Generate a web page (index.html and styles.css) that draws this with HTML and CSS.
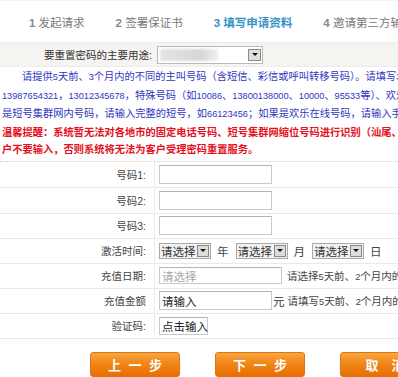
FILE: index.html
```html
<!DOCTYPE html>
<html lang="zh-CN">
<head>
<meta charset="utf-8">
<title>填写申请资料</title>
<link rel="stylesheet" href="styles.css">
</head>
<body>
<div class="page">
  <div class="steps">
    <span class="step"><b class="sn">1</b> 发起请求</span>
    <span class="step"><b class="sn">2</b> 签署保证书</span>
    <span class="step active"><b class="sn">3</b> 填写申请资料</span>
    <span class="step"><b class="sn">4</b> 邀请第三方辅助验证</span>
  </div>

  <div class="purpose">
    <div class="plabel">要重置密码的主要用途:</div>
    <div class="pcell">
      <span class="bigsel"><span class="blur"></span><span class="arrow"></span></span>
    </div>
  </div>

  <div class="info">
    <div class="line blue indent">请提供<span class="num">5</span>天前、<span class="num">3</span>个月内的不同的主叫号码（含短信、彩信或呼叫转移号码）。请填写<span class="num">3~5</span>个号码，如</div>
    <div class="line blue"><span class="num">13987654321</span>，<span class="num">13012345678</span>，特殊号码（如<span class="num">10086</span>、<span class="num">13800138000</span>、<span class="num">10000</span>、<span class="num">95533</span>等）、欢乐在线号码或</div>
    <div class="line blue">是短号集群网内号码，请输入完整的短号，如<span class="num">66123456</span>；如果是欢乐在线号码，请输入手机号码。</div>
    <div class="line red">温馨提醒：系统暂无法对各地市的固定电话号码、短号集群网缩位号码进行识别（汕尾、揭阳用</div>
    <div class="line red">户不要输入，否则系统将无法为客户受理密码重置服务。</div>
  </div>

  <div class="form">
    <div class="row tall">
      <div class="lab">号码1:</div>
      <div class="val"><span class="inp"></span></div>
    </div>
    <div class="row tall">
      <div class="lab">号码2:</div>
      <div class="val"><span class="inp"></span></div>
    </div>
    <div class="row">
      <div class="lab">号码3:</div>
      <div class="val"><span class="inp"></span></div>
    </div>
    <div class="row">
      <div class="lab">激活时间:</div>
      <div class="val">
        <span class="sel">请选择<span class="arr"></span></span><span class="unit">年</span>
        <span class="sel">请选择<span class="arr"></span></span><span class="unit">月</span>
        <span class="sel">请选择<span class="arr"></span></span><span class="unit">日</span>
      </div>
    </div>
    <div class="row">
      <div class="lab">充值日期:</div>
      <div class="val"><span class="inp wide ph">请选择</span><span class="hint">请选择<span class="num">5</span>天前、<span class="num">2</span>个月内的充值日期</span></div>
    </div>
    <div class="row">
      <div class="lab">充值金额</div>
      <div class="val"><span class="inp txt">请输入</span><span class="yuan">元</span><span class="hint">请填写<span class="num">5</span>天前、<span class="num">2</span>个月内的充值金额</span></div>
    </div>
    <div class="row">
      <div class="lab">验证码:</div>
      <div class="val"><span class="inp code txt">点击输入</span></div>
    </div>
  </div>

  <div class="buttons">
    <button class="btn">上 一 步</button>
    <button class="btn">下 一 步</button>
    <button class="btn">取　消</button>
  </div>
</div>
</body>
</html>
```

FILE: styles.css
```css
html, body {
  margin: 0;
  padding: 0;
  background: #fff;
}
body {
  width: 398px;
  height: 377px;
  overflow: hidden;
  font-family: "Liberation Sans", "Noto Sans CJK SC", sans-serif;
  color: #444;
}
.page {
  width: 460px;
}

/* steps */
.steps {
  height: 41px;
  display: flex;
  align-items: center;
  gap: 31px;
  padding-left: 29px;
  border-top: 1px dotted #ececec;
  border-bottom: 1px solid #ebebeb;
  font-size: 11.5px;
  color: #7a7a7a;
  white-space: nowrap;
}
.step .sn {
  font-weight: bold;
  color: #888;
}
.step.active {
  color: #3592c4;
  font-weight: bold;
}
.step.active .sn {
  color: #3592c4;
}

/* purpose row */
.purpose {
  height: 23px;
  display: flex;
  align-items: center;
  background: #f5f4f1;
  border-bottom: 1px solid #ececec;
  font-size: 10.5px;
}
.plabel {
  width: 152px;
  text-align: right;
  color: #333;
}
.pcell {
  padding-left: 5px;
  display: flex;
}
.bigsel {
  width: 101px;
  height: 16px;
  border: 1px solid #b9b9b9;
  background: #fff;
  display: flex;
  align-items: center;
  justify-content: space-between;
  padding: 0 1px 0 2px;
  box-sizing: content-box;
}
.blur {
  width: 58px;
  height: 12px;
  background: linear-gradient(90deg, #e4e4e4, #d6d6d6 70%, #f0f0f0);
  filter: blur(1px);
}
.arrow {
  width: 11px;
  height: 10px;
  border: 1px solid #8a8a8a;
  background: #dedede;
  position: relative;
}
.arrow::after, .arr::after {
  content: "";
  position: absolute;
  left: 50%;
  top: 50%;
  margin-left: -3px;
  margin-top: -1.5px;
  border-left: 3px solid transparent;
  border-right: 3px solid transparent;
  border-top: 3px solid #111;
}

/* info block */
.info {
  padding: 1px 0 2px 2px;
  border-bottom: 1px dotted #f1c6b4;
  font-size: 10.25px;
  line-height: 17.6px;
}
.line {
  white-space: nowrap;
  overflow: hidden;
}
.indent {
  padding-left: 20px;
}
.blue {
  color: #2f36c0;
}
.red {
  color: #e4101c;
  font-weight: bold;
}
.num {
  font-size: 9.2px;
  font-weight: normal;
}

/* form */
.form {
  font-size: 10.5px;
}
.row {
  height: 24px;
  display: flex;
  border-bottom: 1px solid #e9e9e9;
}
.row.tall {
  height: 25px;
}
.lab {
  width: 146px;
  padding-right: 8px;
  text-align: right;
  border-right: 1px solid #ececec;
  display: flex;
  align-items: center;
  justify-content: flex-end;
  color: #444;
}
.val {
  padding-left: 4px;
  display: flex;
  align-items: center;
  white-space: nowrap;
}
.inp {
  width: 109px;
  height: 17px;
  border: 1px solid #c9c9c9;
  border-top-color: #b4b4b4;
  background: #fff;
  display: inline-flex;
  align-items: center;
  padding-left: 2px;
  font-size: 11.5px;
}
.inp.wide {
  width: 119px;
  height: 15px;
}
.inp.ph {
  color: #a8a8a8;
}
.inp.txt {
  color: #1d1d1d;
}
.inp.code {
  width: 45px;
  height: 16px;
}
.hint {
  margin-left: 5px;
  color: #444;
}
.yuan {
  margin-left: 1px;
  font-size: 11.5px;
  color: #333;
}
.yuan + .hint {
  margin-left: 3px;
}
.sel {
  width: 49px;
  height: 14px;
  border: 1px solid #a9a9a9;
  background: #f2f2f2;
  display: inline-flex;
  align-items: center;
  justify-content: space-between;
  padding-left: 1px;
  font-size: 11.5px;
  color: #333;
}
.arr {
  width: 10px;
  height: 10px;
  border: 1px solid #888;
  background: #dcdcdc;
  position: relative;
  margin-right: 1px;
}
.unit {
  margin: 0 7px 0 6px;
  font-size: 11.5px;
  color: #444;
}

/* buttons */
.buttons {
  display: flex;
  gap: 35px;
  padding-left: 90px;
  margin-top: 13px;
}
.btn {
  width: 90px;
  height: 25px;
  border: 1px solid #dd7514;
  border-radius: 3px;
  background: linear-gradient(#f9a640, #f08716 45%, #e86f02);
  color: #fff;
  font-family: "Liberation Sans", "Noto Sans CJK SC", sans-serif;
  font-size: 13px;
  font-weight: bold;
  word-spacing: 4px;
  padding: 0;
  white-space: nowrap;
}
```
